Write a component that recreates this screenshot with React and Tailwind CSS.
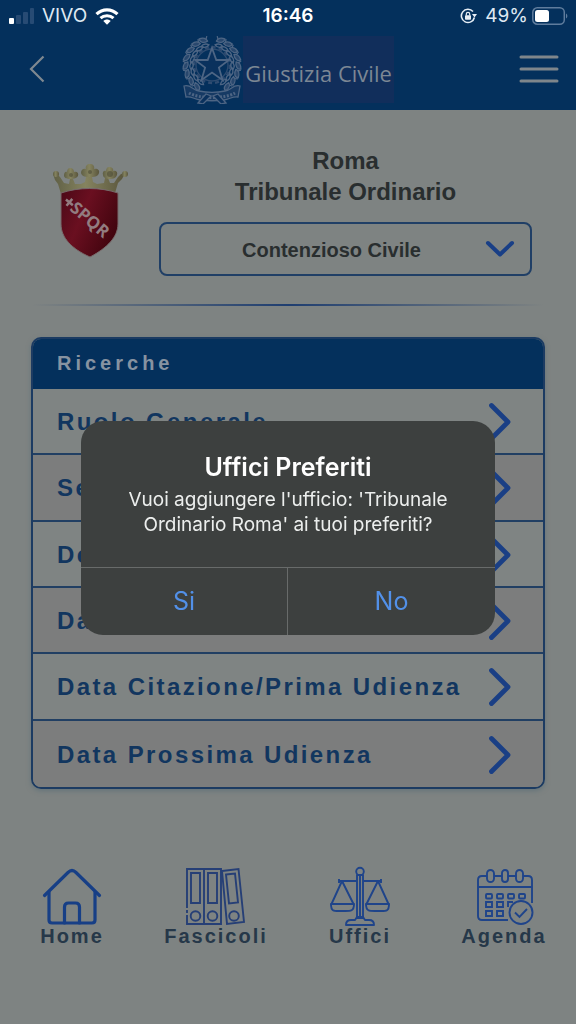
import { useState } from "react";

const searches = [
  "Ruolo Generale",
  "Sentenza",
  "Decreto",
  "Data",
  "Data Citazione/Prima Udienza",
  "Data Prossima Udienza",
];

const leafAngles = [20, 38, 56, 74, 92, 110, 128, 146];

function StatusBar() {
  return (
    <div className="grid h-8 grid-cols-3 items-center pl-2 pr-2 font-['Inter',sans-serif] text-[19px] text-[#dfe8f2]">
      <div className="flex items-center gap-2">
        <svg className="h-4 w-[26px]" viewBox="0 0 26 16">
          <rect x="1" y="10" width="5" height="6" rx="1" fill="#fff" />
          <g fill="#274b74">
            <rect x="8" y="7" width="5" height="9" rx="1" />
            <rect x="15" y="4" width="5" height="12" rx="1" />
            <rect x="22" y="0" width="4" height="16" rx="1" />
          </g>
        </svg>
        <span>VIVO</span>
        <svg className="h-[17px] w-6" viewBox="0 0 24 17" fill="none" stroke="#fff">
          <path d="M1.5 6.2C7.5 0.5 16.5 0.5 22.5 6.2" strokeWidth="3.2" />
          <path d="M5.5 10.2C9 6.8 15 6.8 18.5 10.2" strokeWidth="3" />
          <path d="M8.3 13C10.5 11 13.5 11 15.7 13L12 16.8z" fill="#fff" stroke="none" />
        </svg>
      </div>
      <div className="text-center font-semibold text-white">16:46</div>
      <div className="flex items-center justify-end gap-1">
        <svg className="mr-1 h-4 w-[17px]" viewBox="0 0 17 16" fill="none" stroke="#e6edf5" strokeWidth="1.6">
          <path d="M13 3.6A6.600 6.600 0 1 0 14.400 9.5" />
          <path d="M12 6h5l-2.500 3.500z" fill="#e6edf5" stroke="none" />
          <rect x="5" y="7.2" width="6" height="4.6" rx="0.8" fill="#e6edf5" stroke="none" />
          <path d="M6.3 7.5V6a1.700 1.700 0 0 1 3.400 0v1.500" strokeWidth="1.2" />
        </svg>
        <span>49%</span>
        <svg className="h-[18px] w-9" viewBox="0 0 36 18">
          <rect x="0.8" y="0.8" width="31.5" height="16.4" rx="4.5" fill="none" stroke="#5f7c9d" strokeWidth="1.5" />
          <rect x="3" y="3" width="14" height="12" rx="2.5" fill="#fff" />
          <path d="M34 6.5c1.800 0.800 1.800 4.200 0 5z" fill="#5f7c9d" />
        </svg>
      </div>
    </div>
  );
}

function Emblem() {
  return (
    <svg className="h-[70px] w-[62px]" viewBox="0 0 62 70" fill="none" stroke="#4d6584" strokeWidth="1.3">
      {/* cogwheel and star */}
      <circle cx="31" cy="31" r="18" strokeWidth="2.5" strokeDasharray="4 3" stroke="#2f4c71" />
      <circle cx="31" cy="31" r="16" stroke="#2f4c71" />
      <path
        d="M31 14l4.300 12H48L37.900 33.500 41.500 46 31 38.500 20.500 46 24.100 33.500 14 26h12.700z"
        fill="#0a315d"
        strokeWidth="1.8"
      />
      {/* laurel and oak branches */}
      {leafAngles.map((angle) => (
        <g key={angle}>
          <g transform={`rotate(${angle} 31 31)`}>
            <path d="M27 7c0-3 3-5 7-5 1 3-2 6-7 5z" fill="#29486e" />
            <path d="M27 11c2-2 5-3 8-1-2 2-5 3-8 1zM28 5l-2-3" />
          </g>
          <g transform={`rotate(${-angle} 31 31)`}>
            <path d="M35 7c0-3-3-5-7-5-1 3 2 6 7 5z" fill="#29486e" />
            <path d="M35 11c-2-2-5-3-8-1 2 2 5 3 8 1zM34 5l2-3" />
          </g>
        </g>
      ))}
      {/* ribbon */}
      <path
        d="M3 52c7-2 8 4 15 5 9 2 17 2 26 0 7-1 8-7 15-5l-2 11c-5-1-8 2-14 3-8 1-16 1-24 0-6-1-9-4-14-3z"
        fill="#163a64"
      />
      <path d="M8 59c10 6 36 6 46 0" strokeWidth="3" strokeDasharray="2 1.5" />
      <path d="M17 69l8-9 5 2-8 8zM45 69l-8-9-5 2 8 8z" fill="#0a315d" />
    </svg>
  );
}

function Crest() {
  return (
    <svg className="h-[94px] w-[77px] shrink-0" viewBox="0 0 77 94">
      <defs>
        <linearGradient id="shield" x1="0" x2="1" y1="0" y2="0.5">
          <stop offset="0" stopColor="#4b0917" />
          <stop offset="0.45" stopColor="#6a0f20" />
          <stop offset="1" stopColor="#43050f" />
        </linearGradient>
        <linearGradient id="crown" x1="0" x2="1">
          <stop offset="0" stopColor="#5f5f45" />
          <stop offset="0.45" stopColor="#85835f" />
          <stop offset="1" stopColor="#59553c" />
        </linearGradient>
      </defs>
      {/* mural crown with three florets */}
      <g fill="url(#crown)">
        <path d="M1 10l4 0 3 3 4 6 5 1 1-5h3l2 5 6 0 4-2 1-5h6l1 5 4 2 7-1 1-5h3l2 5 4 0 4-6 3-3 4-1-3 6-4 4-3 10c-17-7-38-7-54 1L6 20l-3-4z" />
        <path d="M18 4c3 0 4 2 4 4 3-1 5 1 4 4-1 2-4 3-7 3s-6 0-7-3c0-3 1-5 3-4 0-2 1-4 3-4z" />
        <path d="M38 0c3 0 5 2 4 5 3-1 6 1 5 4-1 4-5 4-9 4s-8 0-9-4c0-3 2-5 5-4-1-3 1-5 4-5z" />
        <path d="M57 3c3 0 5 2 4 4 3-1 5 1 4 4-1 3-4 4-7 4s-7-1-7-4c-1-3 1-5 3-4 0-2 1-4 3-4z" />
        <circle cx="4" cy="10" r="3" />
        <circle cx="73" cy="10" r="3" />
      </g>
      <g fill="#4c4b37" opacity="0.6">
        <circle cx="19" cy="11" r="2" />
        <circle cx="38" cy="8" r="2" />
        <circle cx="58" cy="10" r="3" />
      </g>
      <path
        d="M9 29c18-6 39-6 57 0v31c0 13-11 24-28 33C20 85 9 74 9 60z"
        fill="url(#shield)"
        stroke="#77696a"
        strokeWidth="1"
      />
      <g transform="rotate(40 17 38)">
        <path d="M13 38h9M17.500 33.500v9" stroke="#927c80" strokeWidth="2.5" />
        <text x="22" y="44" fill="#927c80" className="font-['Open_Sans',sans-serif] text-[17px] font-bold">
          SPQR
        </text>
      </g>
    </svg>
  );
}

function Header() {
  return (
    <header className="bg-[#04305c]">
      <StatusBar />
      <div className="flex h-[78px] items-center justify-between pb-1 pl-7 pr-[17px]">
        <button type="button" aria-label="Indietro" className="w-7">
          <svg className="h-7 w-5" viewBox="0 0 20 28" fill="none" stroke="#7f8890" strokeWidth="2.2">
            <path d="M15.500 1.500L3 14l12.500 12.500" />
          </svg>
        </button>
        <div className="flex items-center">
          <Emblem />
          <div className="flex h-[67px] items-center bg-[#112e5b] px-0.5 pt-2 font-['Open_Sans',sans-serif] text-[22px] text-[#7c8794]">
            Giustizia Civile
          </div>
        </div>
        <button type="button" aria-label="Menu">
          <svg className="h-7 w-10" viewBox="0 0 40 28" stroke="#7f868b" strokeWidth="3" strokeLinecap="round">
            <path d="M2 2h36M2 14h36M2 26h36" />
          </svg>
        </button>
      </div>
    </header>
  );
}

function Office() {
  return (
    <section className="flex items-center gap-[30px] pl-[52px] pr-11 pt-[35px]">
      <Crest />
      <div className="min-w-0 flex-1 text-center">
        <h1 className="text-2xl leading-[31px] font-bold">
          Roma
          <br />
          Tribunale Ordinario
        </h1>
        <div className="relative mt-[15px]">
          <select
            aria-label="Registro"
            className="h-[54px] w-full appearance-none rounded-lg border-2 border-[#203f66] bg-transparent pt-0.5 pr-7 text-center text-xl font-bold [text-align-last:center]"
          >
            <option>Contenzioso Civile</option>
          </select>
          <svg
            className="pointer-events-none absolute right-[17px] top-[18px] h-[18px] w-[30px]"
            viewBox="0 0 30 18"
            fill="none"
            stroke="#193f86"
            strokeWidth="4"
            strokeLinecap="round"
            strokeLinejoin="round"
          >
            <path d="M3 3l12 11.500L27 3" />
          </svg>
        </div>
      </div>
    </section>
  );
}

function SearchCard() {
  return (
    <section className="mx-[31px] mt-[31px] overflow-hidden rounded-[10px] border-2 border-[#1c3b62] shadow-[0_2px_5px_#65747a]">
      <h2 className="flex h-[50px] items-center bg-[#04305c] pb-0.5 pl-6 text-xl font-bold tracking-[4px] text-[#8793a1]">
        Ricerche
      </h2>
      <ul className="grid h-[398px] grid-rows-6">
        {searches.map((label) => (
          <li key={label} className="border-[#213f63] odd:bg-[#7f8483] even:bg-[#7c7d7d] not-last:border-b-2">
            <button
              type="button"
              className="flex h-full w-full items-center justify-between pt-0.5 pl-6 pr-[30px] text-left text-2xl font-bold tracking-widest text-[#12365f]"
            >
              <span>{label}</span>
              <svg
                className="h-10 w-[26px] shrink-0"
                viewBox="0 0 26 40"
                fill="none"
                stroke="#1a3f85"
                strokeWidth="4.8"
                strokeLinecap="round"
                strokeLinejoin="round"
              >
                <path d="M4.500 3.500L21 20 4.500 36.500" />
              </svg>
            </button>
          </li>
        ))}
      </ul>
    </section>
  );
}

function HomeIcon() {
  return (
    <g stroke="#173f86" strokeWidth="3.2" strokeLinecap="round" strokeLinejoin="round">
      <path d="M2.500 29.500L26 6.500q4-4 8 0l23.500 23" />
      <path d="M7 26v28q0 3 3 3h40q3 0 3-3V26" />
      <path d="M22.500 57V41q0-4 4-4h7q4 0 4 4v16" />
    </g>
  );
}

function BindersIcon() {
  return (
    <g stroke="#263f76" strokeWidth="1.9">
      <path d="M1 42V3h17v55H1V49M1 44v3M18 3h17v55H18" />
      <path d="M5 7h9v30H5zM22 7h9v30h-9z" />
      <circle cx="9.500" cy="50" r="4.800" />
      <circle cx="26.500" cy="50" r="4.800" />
      <path d="M36 5l16.500-2L58 56l-17 2z" />
      <path d="M40 8.500l9-1 3 29-9 1z" />
      <circle cx="48" cy="50" r="4.800" />
    </g>
  );
}

function ScalesIcon() {
  return (
    <g stroke="#1f448a" strokeWidth="1.9" strokeLinejoin="round">
      <circle cx="30" cy="5.500" r="3.800" />
      <path d="M27 9h6v43h-6zM30 10v42" />
      <path d="M27 15H9M33 15h18M9 13v4M51 13v4" />
      <path d="M12 15L1.500 38h22zM48 15L36.500 38h22z" />
      <path d="M1 38h23c0 8-4 7-12 7S1 46 1 38zM36 38h23c0 8-3 7-11 7s-12 1-12-7z" />
      <path d="M16 59c0-4 2-5 5-5h4l2-3h6l2 3h4c3 0 5 1 5 5z" />
    </g>
  );
}

function AgendaIcon() {
  return (
    <g stroke="#1f448a" strokeWidth="1.9">
      <path d="M13 10H8q-4 0-4 4v36q0 4 4 4h26M20 10h8M34 10h8M49 10h5q4 0 4 4v23M4 21h54" />
      <rect x="13" y="4" width="7" height="12" rx="3.5" />
      <rect x="28" y="4" width="6" height="12" rx="3" />
      <rect x="42" y="4" width="7" height="12" rx="3.5" />
      {[12, 23, 34, 45].map((x) => (
        <rect key={x} x={x} y="28" width="6" height="4.5" rx="1" />
      ))}
      <path d="M12 36h6v5h-6zM23 36h6v5h-6zM34 41v-5h5M12 45h6v5h-6zM23 45h6v5h-6z" />
      <circle cx="47" cy="46.500" r="11.500" />
      <path d="M41 46.500l4.500 4.500L53 43" />
    </g>
  );
}

const tabs = [
  { label: "Home", Icon: HomeIcon },
  { label: "Fascicoli", Icon: BindersIcon },
  { label: "Uffici", Icon: ScalesIcon },
  { label: "Agenda", Icon: AgendaIcon },
];

function TabBar() {
  return (
    <nav className="mt-[77px] grid grid-cols-4">
      {tabs.map(({ label, Icon }) => (
        <a
          key={label}
          href={`#${label.toLowerCase()}`}
          className="flex flex-col items-center text-xl leading-5 font-bold tracking-widest text-[#263849]"
        >
          <svg className="h-[60px] w-[60px]" viewBox="0 0 60 60" fill="none">
            <Icon />
          </svg>
          {label}
        </a>
      ))}
    </nav>
  );
}

function FavouriteDialog({ onClose }) {
  return (
    <div className="fixed inset-0 flex items-center justify-center px-[81px] pt-8">
      <div
        role="alertdialog"
        aria-labelledby="fav-title"
        aria-describedby="fav-text"
        className="w-full max-w-[416px] overflow-hidden rounded-[22px] bg-[#3d403f] text-center font-['Inter',sans-serif]"
      >
        <div className="px-8 pt-[30px] pb-[30px] text-[#eceeed]">
          <h2 id="fav-title" className="text-[25px] leading-8 font-semibold text-white">
            Uffici Preferiti
          </h2>
          <p id="fav-text" className="mt-1 text-[19px] leading-[25px]">
            Vuoi aggiungere l'ufficio: 'Tribunale Ordinario Roma' ai tuoi preferiti?
          </p>
        </div>
        <div className="grid grid-cols-2 divide-x divide-[#686b6a] border-t border-[#686b6a] text-[25px] text-[#5290e8]">
          <button type="button" className="h-[67px]" onClick={onClose}>
            Si
          </button>
          <button type="button" className="h-[67px]" onClick={onClose}>
            No
          </button>
        </div>
      </div>
    </div>
  );
}

export default function App() {
  const [asking, setAsking] = useState(true);

  return (
    <div className="min-h-screen bg-[#7e8382] font-['Liberation_Sans',sans-serif] text-[#292e2f]">
      <Header />
      <main>
        <Office />
        <div className="mx-8 mt-7 h-0.5 bg-linear-to-r from-transparent via-[#1f3e70] to-transparent" />
        <SearchCard />
      </main>
      <TabBar />
      {asking && <FavouriteDialog onClose={() => setAsking(false)} />}
    </div>
  );
}
